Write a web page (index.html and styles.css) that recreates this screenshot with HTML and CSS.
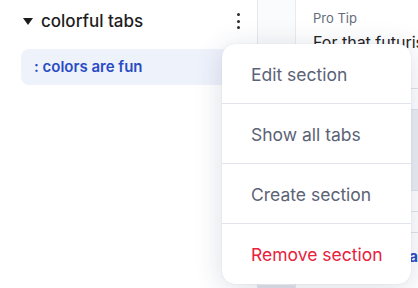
FILE: index.html
```html
<!DOCTYPE html>
<html lang="en">
<head>
    <meta charset="UTF-8">
    <title>colorful tabs</title>
    <link rel="stylesheet" href="styles.css">
</head>
<body>
<div class="layout">
    <aside class="sidebar">
        <div class="section-head">
            <span class="caret"></span>
            <span class="section-title">colorful tabs</span>
            <button class="kebab"><i></i><i></i><i></i></button>
        </div>
        <div class="tab-pill">: colors are fun</div>
    </aside>
    <div class="gutter">
        <div class="gutter-foot"></div>
    </div>
    <main class="content">
        <div class="tip-label">Pro Tip</div>
        <div class="tip-text">For that futuristic look</div>
        <div class="table">
            <div class="row"></div>
            <div class="row shaded"></div>
            <div class="row"></div>
            <div class="row"></div>
        </div>
        <div class="link">a</div>
    </main>
</div>

<div class="menu">
    <div class="menu-item">Edit section</div>
    <div class="menu-item">Show all tabs</div>
    <div class="menu-item">Create section</div>
    <div class="menu-item danger">Remove section</div>
</div>
</body>
</html>
```

FILE: styles.css
```css
body {
    margin: 0;
    font-family: 'Inter', 'Liberation Sans', sans-serif;
    background: #fff;
    overflow: hidden;
}

.layout {
    display: flex;
    height: 288px;
}

.sidebar {
    flex: 0 0 258px;
    border-right: 1px solid #e6e8ef;
    padding: 8px 0 0 21px;
    box-sizing: border-box;
}

.section-head {
    display: flex;
    align-items: center;
    height: 26px;
    padding-left: 2px;
}

.caret {
    width: 0;
    height: 0;
    border-left: 5px solid transparent;
    border-right: 5px solid transparent;
    border-top: 7px solid #1c1c1f;
    margin-right: 8px;
}

.section-title {
    font-size: 17px;
    font-weight: 500;
    color: #1d1d22;
    line-height: 26px;
    flex: 1;
}

.kebab {
    border: none;
    background: none;
    padding: 0;
    width: 10px;
    margin-right: 14px;
    display: flex;
    flex-direction: column;
    align-items: center;
    gap: 3.5px;
}

.kebab i {
    width: 3px;
    height: 3px;
    border-radius: 50%;
    background: #2a2a30;
}

.tab-pill {
    margin-top: 15px;
    height: 36px;
    line-height: 36px;
    background: #eef2fb;
    border-radius: 8px;
    padding-left: 13px;
    font-size: 15px;
    font-weight: 600;
    color: #2a4cc4;
}

.gutter {
    flex: 0 0 37px;
    background: #fafbfc;
    border-right: 1px solid #e9eaf0;
    position: relative;
}

.gutter-foot {
    position: absolute;
    bottom: 0;
    left: 0;
    right: 0;
    height: 3px;
    background: #e3e4ea;
}

.content {
    flex: 1;
    min-width: 0;
    overflow: hidden;
    padding: 10px 0 0 17px;
}

.tip-label {
    font-size: 13px;
    color: #646b7a;
    line-height: 16px;
}

.tip-text {
    margin-top: 6px;
    font-size: 16px;
    color: #222;
    white-space: nowrap;
}

.table {
    margin-top: 36px;
    border-top: 1px solid #e2e4ea;
}

.row {
    height: 20px;
    border-bottom: 1px solid #e2e4ea;
}

.row.shaded {
    height: 80px;
    background: #eceef3;
}

.link {
    margin-top: 14px;
    text-align: right;
    font-weight: 700;
    color: #2a4cc4;
    font-size: 15px;
}

.menu {
    position: absolute;
    left: 222px;
    top: 44px;
    width: 189px;
    background: #fff;
    border-radius: 13px;
    box-shadow: 0 4px 28px rgba(40, 50, 100, 0.16), 0 0 1px rgba(40, 50, 100, 0.2);
    overflow: hidden;
}

.menu-item {
    height: 59px;
    line-height: 62px;
    padding-left: 29px;
    font-size: 17.5px;
    color: #5b6376;
    border-bottom: 1px solid #e3e5ee;
}

.menu-item:last-child {
    border-bottom: none;
    height: 60px;
}

.menu-item.danger {
    color: #e8213c;
}
```
